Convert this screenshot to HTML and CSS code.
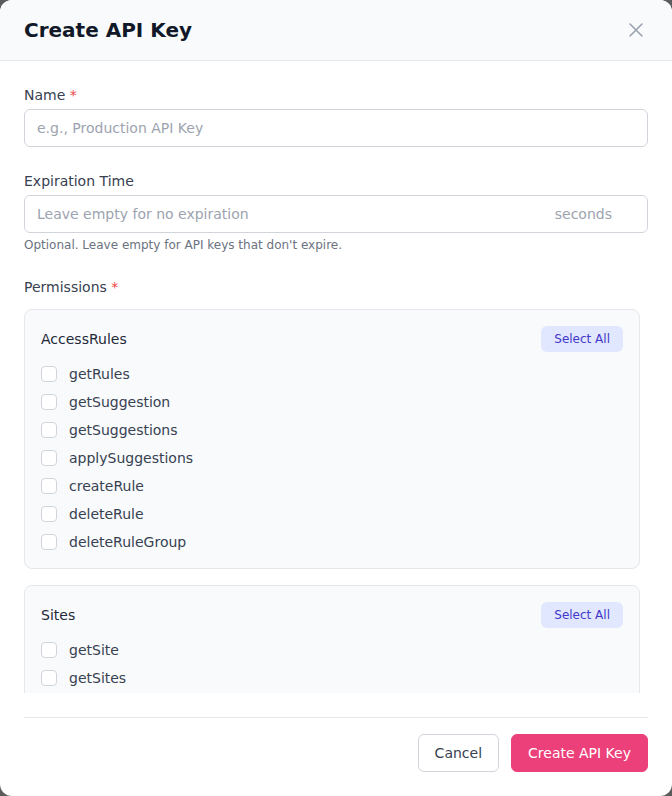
FILE: index.html
```html
<!DOCTYPE html>
<html lang="en">
<head>
<meta charset="utf-8">
<title>Create API Key</title>
<link rel="stylesheet" href="styles.css">
</head>
<body>
<div class="modal">
  <div class="modal-header">
    <h2 class="modal-title">Create API Key</h2>
    <button class="close-btn" aria-label="Close">
      <svg width="16" height="16" viewBox="0 0 16 16" fill="none" stroke="currentColor" stroke-width="1.6" stroke-linecap="round"><path d="M2 2L14 14M14 2L2 14"/></svg>
    </button>
  </div>
  <div class="modal-body">
    <div class="field">
      <label class="label">Name <span class="req">*</span></label>
      <input class="input" type="text" placeholder="e.g., Production API Key">
    </div>
    <div class="field">
      <label class="label">Expiration Time</label>
      <div class="input-wrap">
        <input class="input" type="text" placeholder="Leave empty for no expiration">
        <span class="suffix">seconds</span>
      </div>
      <p class="help">Optional. Leave empty for API keys that don't expire.</p>
    </div>
    <div class="field">
      <label class="label perm-label">Permissions <span class="req">*</span></label>
      <div class="perm-scroll">
        <div class="perm-card">
          <div class="perm-head">
            <span class="perm-name">AccessRules</span>
            <button class="select-all">Select All</button>
          </div>
          <div class="perm-list">
            <label class="perm-item"><span class="cb"></span>getRules</label>
            <label class="perm-item"><span class="cb"></span>getSuggestion</label>
            <label class="perm-item"><span class="cb"></span>getSuggestions</label>
            <label class="perm-item"><span class="cb"></span>applySuggestions</label>
            <label class="perm-item"><span class="cb"></span>createRule</label>
            <label class="perm-item"><span class="cb"></span>deleteRule</label>
            <label class="perm-item"><span class="cb"></span>deleteRuleGroup</label>
          </div>
        </div>
        <div class="perm-card">
          <div class="perm-head">
            <span class="perm-name">Sites</span>
            <button class="select-all">Select All</button>
          </div>
          <div class="perm-list">
            <label class="perm-item"><span class="cb"></span>getSite</label>
            <label class="perm-item"><span class="cb"></span>getSites</label>
          </div>
        </div>
      </div>
    </div>
    <div class="modal-footer">
      <button class="btn btn-secondary">Cancel</button>
      <button class="btn btn-primary">Create API Key</button>
    </div>
  </div>
</div>
</body>
</html>
```
FILE: styles.css
```css
* { box-sizing: border-box; }
html, body { margin: 0; padding: 0; }
body {
  background: #5c5c5c;
  font-family: "DejaVu Sans", "Liberation Sans", sans-serif;
  color: #374151;
  width: 672px;
  height: 796px;
  overflow: hidden;
}
.modal {
  width: 672px;
  height: 796px;
  background: #ffffff;
  border-radius: 12px;
  overflow: hidden;
  display: flex;
  flex-direction: column;
}
.modal-header {
  display: flex;
  align-items: center;
  justify-content: space-between;
  height: 61px;
  padding: 0 28px 0 24px;
  background: #f8fafc;
  border-bottom: 1px solid #e5e7eb;
}
.modal-title {
  margin: 0;
  font-size: 20px;
  line-height: 28px;
  font-weight: 700;
  color: #111827;
}
.close-btn {
  background: none;
  border: none;
  padding: 0;
  width: 16px;
  height: 16px;
  color: #9ca3af;
  display: flex;
  align-items: center;
  justify-content: center;
  cursor: pointer;
}
.modal-body {
  padding: 24px 24px 24px;
  display: flex;
  flex-direction: column;
}
.field { display: flex; flex-direction: column; margin-bottom: 24px; }
.label {
  font-size: 14px;
  line-height: 20px;
  color: #374151;
  margin-bottom: 4px;
}
.perm-label { margin-bottom: 12px; }
.req { color: #ef4444; }
.input {
  width: 100%;
  height: 38px;
  padding: 8px 12px;
  border: 1px solid #d1d5db;
  border-radius: 6px;
  font-family: inherit;
  font-size: 14px;
  line-height: 20px;
  color: #111827;
  background: #fff;
  outline: none;
}
.input::placeholder { color: #9ca3af; }
.input-wrap { position: relative; }
.suffix {
  position: absolute;
  right: 36px;
  top: 9px;
  font-size: 14px;
  line-height: 20px;
  color: #9ca3af;
}
.help {
  margin: 4px 0 0;
  font-size: 12px;
  line-height: 16px;
  color: #6b7280;
}
.perm-scroll {
  height: 384px;
  overflow: hidden;
  padding-right: 8px;
  display: flex;
  flex-direction: column;
  gap: 16px;
}
.perm-card {
  flex-shrink: 0;
  background: #f8fafc;
  border: 1px solid #e5e7eb;
  border-radius: 8px;
  padding: 16px;
}
.perm-head {
  display: flex;
  align-items: center;
  justify-content: space-between;
  margin-bottom: 12px;
}
.perm-name {
  font-size: 14px;
  line-height: 20px;
  color: #1f2937;
}
.select-all {
  font-family: inherit;
  font-size: 12px;
  line-height: 18px;
  padding: 4px 13px;
  border: none;
  border-radius: 6px;
  background: #e0e7ff;
  color: #4338ca;
  cursor: pointer;
}
.perm-list { display: flex; flex-direction: column; gap: 8px; }
.perm-item {
  display: flex;
  align-items: center;
  gap: 12px;
  font-size: 14px;
  line-height: 20px;
  color: #374151;
}
.cb {
  width: 16px;
  height: 16px;
  border: 1px solid #d1d5db;
  border-radius: 4px;
  background: #fff;
  flex-shrink: 0;
}
.modal-footer {
  border-top: 1px solid #e5e7eb;
  padding-top: 16px;
  display: flex;
  justify-content: flex-end;
  gap: 12px;
}
.btn {
  font-family: inherit;
  font-size: 14px;
  line-height: 20px;
  padding: 8px 16px;
  border-radius: 6px;
  cursor: pointer;
  height: 38px;
}
.btn-secondary {
  background: #fff;
  border: 1px solid #d1d5db;
  color: #374151;
}
.btn-primary {
  background: #ec407a;
  border: 1px solid #ec407a;
  color: #fff;
}
```
